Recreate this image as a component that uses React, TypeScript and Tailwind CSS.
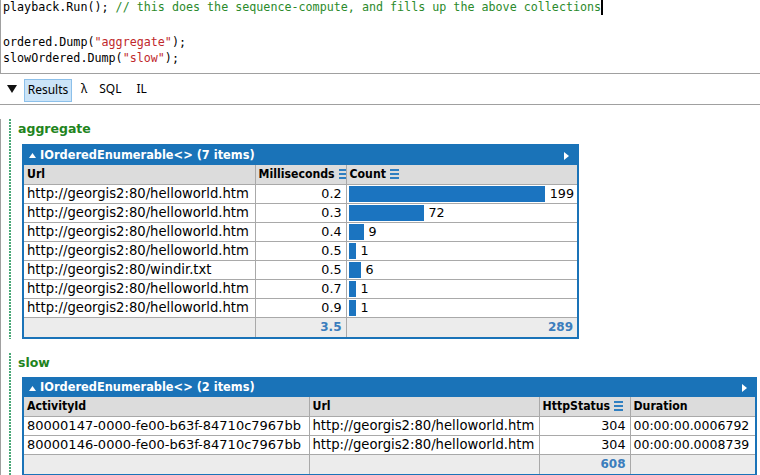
import React from "react";

const URL1 = "http://georgis2:80/helloworld.htm";

const aggregate: [string, string, number][] = [
  [URL1, "0.2", 199],
  [URL1, "0.3", 72],
  [URL1, "0.4", 9],
  [URL1, "0.5", 1],
  ["http://georgis2:80/windir.txt", "0.5", 6],
  [URL1, "0.7", 1],
  [URL1, "0.9", 1],
];

const slow = [
  ["80000147-0000-fe00-b63f-84710c7967bb", URL1, "304", "00:00:00.0006792"],
  ["80000146-0000-fe00-b63f-84710c7967bb", URL1, "304", "00:00:00.0008739"],
];

function SortIcon() {
  return (
    <svg width="9" height="10" viewBox="0 0 9 10" className="inline-block ml-[4px] align-[-1px]">
      <rect x="0" y="0" width="9" height="2" fill="#2f7fc1" />
      <rect x="0" y="4" width="9" height="2" fill="#2f7fc1" />
      <rect x="0" y="8" width="9" height="2" fill="#2f7fc1" />
    </svg>
  );
}

function Caption({ text, tall }: { text: string; tall?: boolean }) {
  return (
    <div
      className={
        (tall ? "h-[19px]" : "h-[18px]") +
        " bg-[#1a73b8] flex items-center pl-[5px] pr-[8px] text-white font-bold text-[11.4px] font-['DejaVu_Sans',sans-serif]"
      }
    >
      <svg width="7" height="5" viewBox="0 0 7 5" className="mr-[4px]">
        <polygon points="0,5 3.5,0 7,5" fill="#fff" />
      </svg>
      <span>{text}</span>
      <svg width="5" height="8" viewBox="0 0 5 8" className="ml-auto">
        <polygon points="0,0 5,4 0,8" fill="#fff" />
      </svg>
    </div>
  );
}

const th =
  "h-[19px] p-0 px-[3px] bg-[#dcdcdc] text-left font-bold text-[12.2px] leading-[18px] border-b border-[#a9a9a9] font-['DejaVu_Sans_Condensed','Liberation_Sans',sans-serif] whitespace-nowrap overflow-hidden";
const td = "h-[19px] p-0 px-[3px] leading-[18px] border-b border-[#a9a9a9] whitespace-nowrap overflow-hidden";
const tot = "h-[20px] p-0 px-[4px] leading-[18px] bg-[#ececec] text-right font-bold text-[12px] text-[#3a7dbd]";

function Section({ title, gap, children }: { title: string; gap: string; children: React.ReactNode }) {
  return (
    <div className="flex mt-[14px]">
      <div className="ml-[8px] w-[2px] shrink-0 bg-[linear-gradient(to_bottom,#4aa878_60%,transparent_60%)] bg-[length:2px_3px]" />
      <div className="flex-1 min-w-0">
        <div className="pl-[7px] h-[18px] pt-[2px] leading-[16px] font-bold text-[12.5px] text-[#22841c] font-['DejaVu_Sans',sans-serif]">
          {title}
        </div>
        <div className={gap + " ml-[11px]"}>{children}</div>
      </div>
    </div>
  );
}

export default function App() {
  return (
    <div className="w-[760px] h-[475px] overflow-hidden bg-white text-black">
      {/* editor */}
      <div className="h-[75px] border-l border-b border-[#a0a0a0] pl-[2px] text-[11.7px] leading-[16px] font-['DejaVu_Sans_Mono',monospace]">
        <div className="h-[16px] -mt-[1px] flex items-center">
          <span>playback.Run(); </span>
          <span className="text-[#2b8a2b]">&nbsp;// this does the sequence-compute, and fills up the above collections</span>
          <span className="inline-block w-[2px] h-[15px] bg-black" />
        </div>
        <div className="mt-[19px]">
          ordered.Dump(<span className="text-[#c0282b]">"aggregate"</span>);
        </div>
        <div>
          slowOrdered.Dump(<span className="text-[#c0282b]">"slow"</span>);
        </div>
      </div>

      {/* toolbar */}
      <div className="h-[31px] flex items-center text-[12px] font-['Noto_Sans',sans-serif] border-b border-[#a0a0a0]">
        <svg width="10" height="8" viewBox="0 0 10 8" className="ml-[7px]">
          <polygon points="0,0 10,0 5,8" fill="#111" />
        </svg>
        <div className="ml-[7px] mt-[2px] w-[48px] h-[23px] border border-[#8cc0ea] bg-[#cbe4f8] flex items-center justify-center">
          Results
        </div>
        <span className="ml-[9px]">λ</span>
        <span className="ml-[12px]">SQL</span>
        <span className="ml-[15px]">IL</span>
      </div>

      {/* results */}
      <div className="border-l border-[#a0a0a0] h-[370px] font-['DejaVu_Sans',sans-serif] text-[12.7px]">
        <Section title="aggregate" gap="mt-[7px]">
          <div className="w-[557px] border-2 border-[#1a73b8]">
            <Caption text="IOrderedEnumerable<> (7 items)" tall />
            <table className="table-fixed border-collapse w-full">
              <colgroup>
                <col className="w-[231px]" />
                <col className="w-[91px]" />
                <col />
              </colgroup>
              <thead>
                <tr>
                  <th className={th + " border-r"}>Url</th>
                  <th className={th + " border-r"}>
                    Milliseconds
                    <SortIcon />
                  </th>
                  <th className={th}>
                    Count
                    <SortIcon />
                  </th>
                </tr>
              </thead>
              <tbody>
                {aggregate.map(([u, ms, c], i) => (
                  <tr key={i}>
                    <td className={td + " border-r text-[13.2px]"}>{u}</td>
                    <td className={td + " border-r text-right pr-[4px]"}>{ms}</td>
                    <td className={td + " pl-[2px]"}>
                      <div className="flex items-center">
                        <div className="h-[16px] bg-[#1b74c0]" style={{ width: Math.round(6 + (c * 191) / 199) }} />
                        <span className="ml-[5px]">{c}</span>
                      </div>
                    </td>
                  </tr>
                ))}
                <tr>
                  <td className={tot + " border-r border-[#a9a9a9]"} />
                  <td className={tot + " border-r border-[#a9a9a9]"}>3.5</td>
                  <td className={tot}>289</td>
                </tr>
              </tbody>
            </table>
          </div>
        </Section>

        <Section title="slow" gap="mt-[6px]">
          <div className="w-[735px] border-2 border-[#1a73b8]">
            <Caption text="IOrderedEnumerable<> (2 items)" />
            <table className="table-fixed border-collapse w-full">
              <colgroup>
                <col className="w-[285px]" />
                <col className="w-[230px]" />
                <col className="w-[91px]" />
                <col />
              </colgroup>
              <thead>
                <tr>
                  <th className={th + " border-r"}>ActivityId</th>
                  <th className={th + " border-r"}>Url</th>
                  <th className={th + " border-r"}>
                    HttpStatus
                    <SortIcon />
                  </th>
                  <th className={th}>Duration</th>
                </tr>
              </thead>
              <tbody>
                {slow.map((r, i) => (
                  <tr key={i}>
                    <td className={td + " border-r text-[13px]"}>{r[0]}</td>
                    <td className={td + " border-r text-[13.2px]"}>{r[1]}</td>
                    <td className={td + " border-r text-right pr-[4px]"}>{r[2]}</td>
                    <td className={td + " text-[12.5px]"}>{r[3]}</td>
                  </tr>
                ))}
                <tr>
                  <td className={tot + " border-r border-[#a9a9a9]"} />
                  <td className={tot + " border-r border-[#a9a9a9]"} />
                  <td className={tot + " border-r border-[#a9a9a9]"}>608</td>
                  <td className={tot} />
                </tr>
              </tbody>
            </table>
          </div>
        </Section>
      </div>
    </div>
  );
}
